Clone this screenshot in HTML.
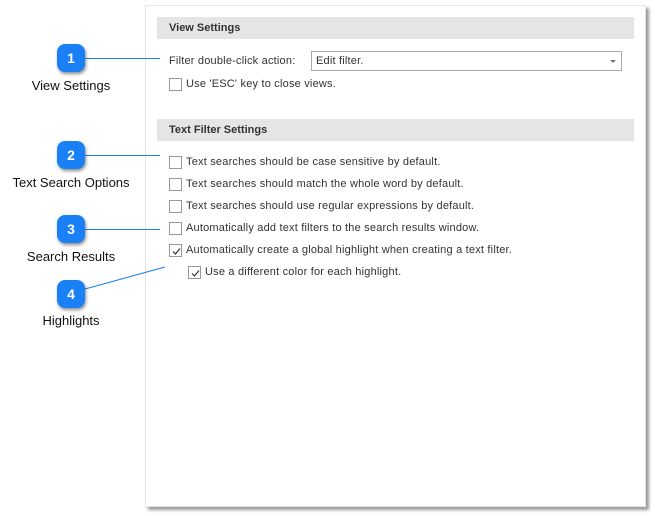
<!DOCTYPE html>
<html><head><style>
body{margin:0;width:655px;height:516px;background:#fff;position:relative;font-family:"Liberation Sans",sans-serif;overflow:hidden}
.panel{position:absolute;left:145px;top:5px;width:501px;height:502px;background:#fff;border:1px solid #e6e6e6;box-sizing:border-box;box-shadow:3px 3px 3px #999}
.hdr{position:absolute;left:157px;width:477px;height:22px;background:#e5e5e5;font-size:11px;font-weight:bold;color:#333;line-height:22px;padding-left:12px;box-sizing:border-box}
.t{position:absolute;font-size:11px;color:#333;letter-spacing:0.2px;white-space:nowrap;line-height:13px}
.cb{position:absolute;width:13px;height:13px;border:1px solid #999;box-sizing:border-box;background:#fff}
.cb svg{position:absolute;left:1px;top:1px}
.bub{position:absolute;width:28px;height:28px;border-radius:8px;background:#1a80f5;color:#fff;font-size:14px;font-weight:bold;text-align:center;line-height:28px;box-shadow:1px 2px 3px rgba(0,0,0,.45)}
.lab{position:absolute;font-size:13px;color:#111;white-space:nowrap;transform:translateX(-50%)}
</style></head><body>
<div class="panel"></div>
<div class="hdr" style="top:17px">View Settings</div>
<div class="hdr" style="top:119px">Text Filter Settings</div>
<div class="t" style="left:169px;top:55px">Filter double-click action:</div>
<div style="position:absolute;left:311px;top:51px;width:311px;height:20px;border:1px solid #a8a8a8;box-sizing:border-box"></div>
<div class="t" style="left:316px;top:55px">Edit filter.</div>
<div style="position:absolute;left:610px;top:60px;width:0;height:0;border-left:3px solid transparent;border-right:3px solid transparent;border-top:3px solid #777"></div>

<div class="cb" style="left:169px;top:78px"></div><div class="t" style="left:186px;top:78px">Use 'ESC' key to close views.</div>
<div class="cb" style="left:169px;top:156px"></div><div class="t" style="left:186px;top:156px">Text searches should be case sensitive by default.</div>
<div class="cb" style="left:169px;top:178px"></div><div class="t" style="left:186px;top:178px">Text searches should match the whole word by default.</div>
<div class="cb" style="left:169px;top:200px"></div><div class="t" style="left:186px;top:200px">Text searches should use regular expressions by default.</div>
<div class="cb" style="left:169px;top:222px"></div><div class="t" style="left:186px;top:222px">Automatically add text filters to the search results window.</div>
<div class="cb" style="left:169px;top:244px"><svg width="11" height="11"><path d="M2 5.5L4.5 8L9 2.5" stroke="#333" stroke-width="1.2" fill="none"/></svg></div><div class="t" style="left:186px;top:244px">Automatically create a global highlight when creating a text filter.</div>
<div class="cb" style="left:188px;top:266px"><svg width="11" height="11"><path d="M2 5.5L4.5 8L9 2.5" stroke="#333" stroke-width="1.2" fill="none"/></svg></div><div class="t" style="left:205px;top:266px">Use a different color for each highlight.</div>

<svg style="position:absolute;left:0;top:0" width="655" height="516">
<line x1="85" y1="58.5" x2="160" y2="58.5" stroke="#1a80f5" stroke-width="1.2" shape-rendering="crispEdges"/>
<line x1="85" y1="155.5" x2="160" y2="155.5" stroke="#1a80f5" stroke-width="1.2" shape-rendering="crispEdges"/>
<line x1="85" y1="229.5" x2="160" y2="229.5" stroke="#1a80f5" stroke-width="1.2" shape-rendering="crispEdges"/>
<line x1="85" y1="289" x2="165" y2="267" stroke="#1a80f5" stroke-width="1"/>
</svg>
<div class="bub" style="left:57px;top:44px">1</div>
<div class="bub" style="left:57px;top:141px">2</div>
<div class="bub" style="left:57px;top:215px">3</div>
<div class="bub" style="left:57px;top:280px">4</div>
<div class="lab" style="left:71px;top:78px">View Settings</div>
<div class="lab" style="left:71px;top:175px">Text Search Options</div>
<div class="lab" style="left:71px;top:249px">Search Results</div>
<div class="lab" style="left:71px;top:313px">Highlights</div>
</body></html>
